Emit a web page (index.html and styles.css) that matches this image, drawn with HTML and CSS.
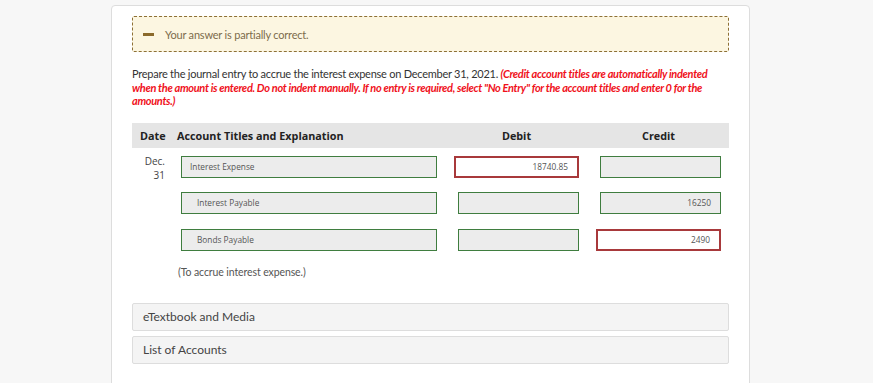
FILE: index.html
```html
<!DOCTYPE html>
<html lang="en">
<head>
    <meta charset="UTF-8">
    <title>Journal Entry</title>
    <link rel="stylesheet" href="styles.css">
</head>
<body>

<div class="card">
    <div class="alert">
        <span class="alert-icon"></span>
        <span class="alert-text">Your answer is partially correct.</span>
    </div>

    <p class="question">
        Prepare the journal entry to accrue the interest expense on December 31, 2021.
        <em class="note">(Credit account titles are automatically indented<br>when the amount is entered. Do not indent manually. If no entry is required, select "No Entry" for the account titles and enter 0 for the<br>amounts.)</em>
    </p>

    <div class="journal">
        <div class="journal-head">
            <div class="col-date">Date</div>
            <div class="col-account">Account Titles and Explanation</div>
            <div class="col-amount"><span>Debit</span></div>
            <div class="col-amount"><span>Credit</span></div>
        </div>

        <div class="journal-row first">
            <div class="col-date">Dec.<br>31</div>
            <div class="col-account"><div class="field ok">Interest Expense</div></div>
            <div class="col-amount"><div class="field num wrong">18740.85</div></div>
            <div class="col-amount"><div class="field num ok"></div></div>
        </div>

        <div class="journal-row">
            <div class="col-date"></div>
            <div class="col-account"><div class="field ok indent">Interest Payable</div></div>
            <div class="col-amount"><div class="field num ok"></div></div>
            <div class="col-amount"><div class="field num ok">16250</div></div>
        </div>

        <div class="journal-row">
            <div class="col-date"></div>
            <div class="col-account"><div class="field ok indent">Bonds Payable</div></div>
            <div class="col-amount"><div class="field num ok"></div></div>
            <div class="col-amount"><div class="field num wrong">2490</div></div>
        </div>

        <div class="explanation">(To accrue interest expense.)</div>
    </div>

    <div class="panel first">eTextbook and Media</div>
    <div class="panel">List of Accounts</div>
</div>

</body>
</html>
```

FILE: styles.css
```css
body {
    margin: 0;
    background-color: #f7f7f7;
    font-family: Lato, "Open Sans", sans-serif;
    color: #333;
}
.card {
    width: 597px;
    margin: 5px 0 0 111px;
    padding: 10px 20px 20px 20px;
    background-color: #fff;
    border: 1px solid #ddd;
    border-radius: 4px;
    min-height: 400px;
}
.alert {
    display: flex;
    align-items: center;
    height: 34px;
    padding-left: 10px;
    background-color: #fcf6e1;
    border: 1px dashed #8d7036;
    border-radius: 2px;
}
.alert-icon {
    width: 11px;
    height: 3px;
    background-color: #8b6a2b;
    margin-right: 11px;
}
.alert-text {
    font-size: 11px;
    letter-spacing: -0.2px;
    color: #7c6c4c;
}
.question {
    margin: 15px 0 0 0;
    font-size: 11px;
    line-height: 13.5px;
    letter-spacing: -0.25px;
    color: #333;
}
.note {
    color: #f0111b;
    font-weight: bold;
    letter-spacing: -0.33px;
}
.journal {
    margin-top: 15px;
}
.journal-head {
    display: grid;
    grid-template-columns: 45px 277px 142px 1fr;
    height: 25px;
    align-items: center;
    background-color: #e5e5e5;
    font-family: "Open Sans", sans-serif;
    font-size: 10.8px;
    font-weight: bold;
    color: #222;
}
.journal-head .col-date {
    padding-left: 8px;
}
.journal-head .col-amount span {
    display: block;
    width: 121px;
    margin-left: 2px;
    text-align: center;
}
.journal-row {
    display: grid;
    grid-template-columns: 45px 277px 142px 1fr;
    height: 22px;
    margin-bottom: 14.5px;
}
.journal-row.first {
    margin-top: 8px;
}
.journal-row .col-date {
    margin-top: -2px;
    padding-right: 12px;
    text-align: right;
    font-family: "Open Sans", sans-serif;
    font-size: 10px;
    line-height: 14px;
    color: #444;
}
.field {
    box-sizing: border-box;
    height: 22px;
    margin-left: 4px;
    padding: 0 9px 0 8px;
    background-color: #ececec;
    border: 1px solid #3f7d3f;
    font-family: "Open Sans", sans-serif;
    font-size: 8.3px;
    line-height: 20px;
    color: #555;
}
.col-account .field {
    width: 256px;
}
.field.indent {
    padding-left: 15px;
}
.field.num {
    width: 121px;
    text-align: right;
}
.field.wrong {
    width: 125px;
    margin-left: 0;
    background-color: #fff;
    border: 2px solid #a8393b;
    line-height: 18px;
}
.explanation {
    margin-left: 46px;
    font-size: 10.5px;
    line-height: 14px;
    letter-spacing: -0.1px;
    color: #555;
}
.panel {
    box-sizing: border-box;
    height: 28px;
    margin-top: 5px;
    padding-left: 10px;
    background-color: #f4f4f4;
    border: 1px solid #ddd;
    border-radius: 2px;
    font-size: 12px;
    line-height: 26px;
    color: #444;
}
.panel.first {
    margin-top: 24px;
}
```
